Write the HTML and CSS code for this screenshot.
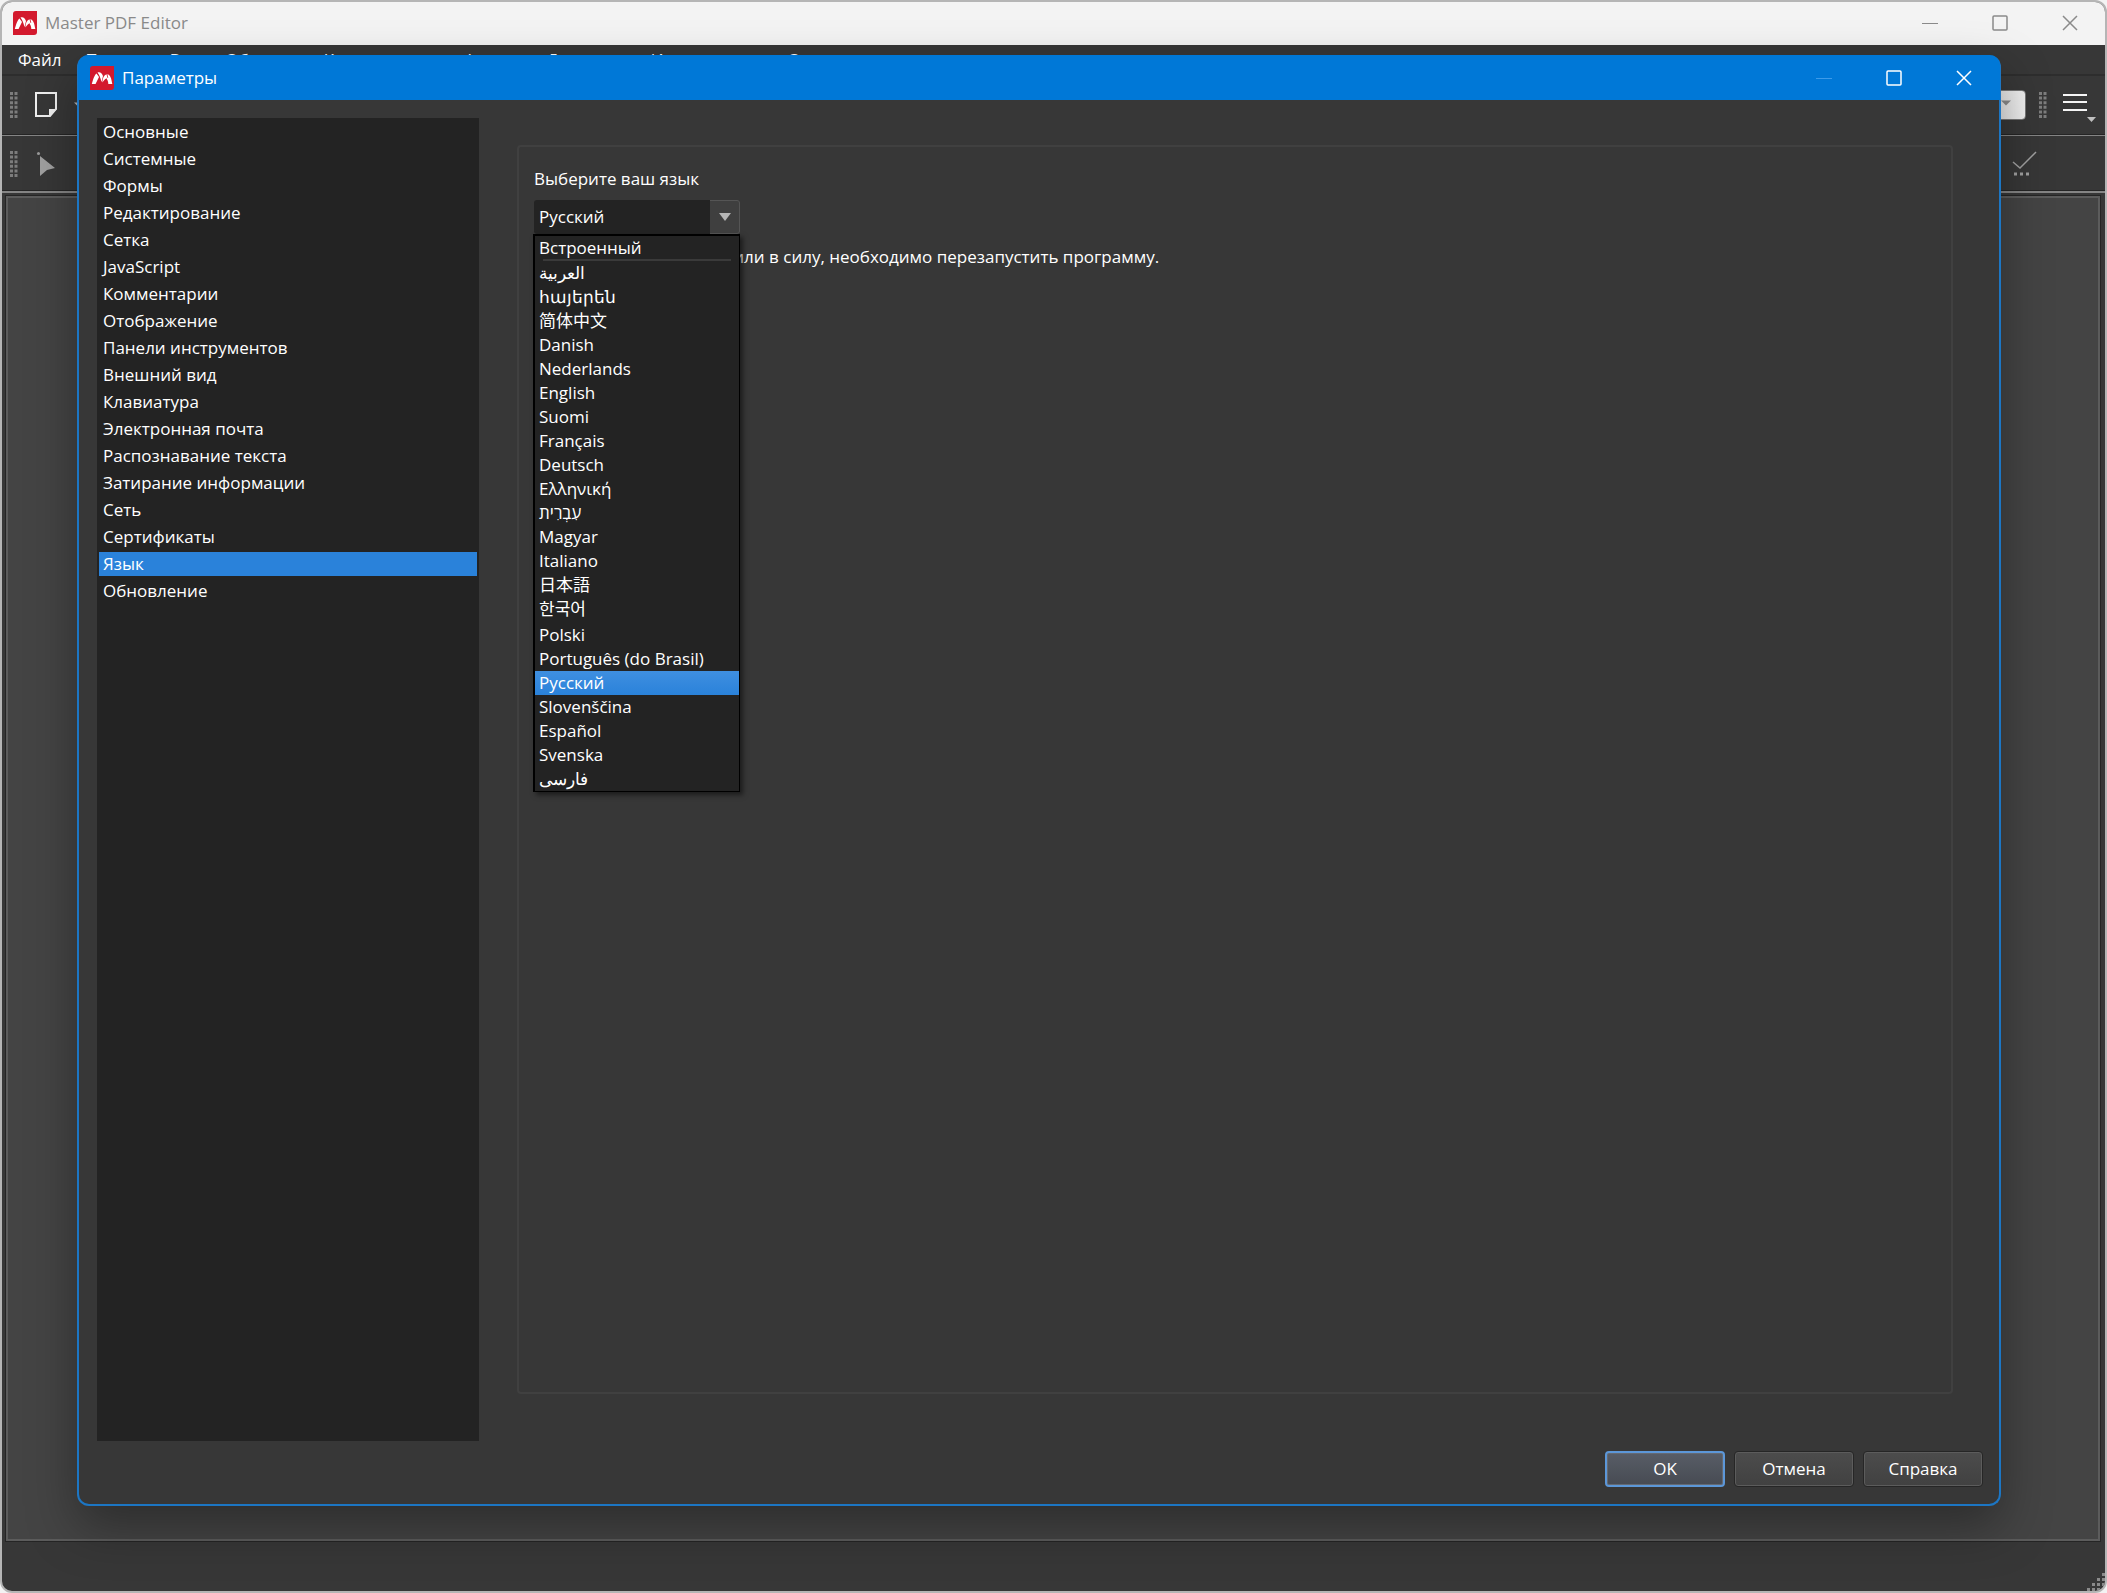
FILE: index.html
```html
<!DOCTYPE html>
<html lang="ru">
<head>
  <meta charset="utf-8">
  <title>Master PDF Editor</title>
  <link rel="stylesheet" href="styles.css">
</head>
<body>
  <svg class="defs" aria-hidden="true">
    <symbol id="logo" viewBox="0 0 24 24">
      <path d="M3 0h21v21a3 3 0 0 1-3 3H0V3a3 3 0 0 1 3-3z" fill="#d3192d"/>
      <path d="M1.800 18C3 14 4 9.500 6.500 7.500L9 11 5.500 18z" fill="#fff"/>
      <path d="M7.500 6.500C10 5.500 12 7 13 10l-1.500 6C10.500 12 9.500 9 7.500 6.500z" fill="#fff"/>
      <path d="M12.300 16.500C12.500 12 14 9 16.500 8.200l1 3.500c-2 .5-3.500 2.500-5.200 4.800z" fill="#fff"/>
      <path d="M17.300 8.200C20.500 8.500 21.500 13 22.300 18h-4c0-2.500-.8-4.500-2-5.500l2-1z" fill="#fff"/>
    </symbol>
    <symbol id="grip" viewBox="0 0 8 26">
      <path d="M1.500 0v26M6 0v26" stroke="#7d7d7d" stroke-width="3" stroke-dasharray="3 1.600"/>
    </symbol>
    <symbol id="min" viewBox="0 0 16 16"><path d="M0 8.500h16" stroke="currentColor"/></symbol>
    <symbol id="max" viewBox="0 0 16 16"><rect x="1" y="1" width="14" height="14" rx="1" fill="none" stroke="currentColor" stroke-width="1.500"/></symbol>
    <symbol id="close" viewBox="0 0 16 16"><path d="M1 1l14 14M15 1L1 15" stroke="currentColor" stroke-width="1.500"/></symbol>
  </svg>

  <div class="window">
    <header class="titlebar">
      <svg class="logo"><use href="#logo"/></svg>
      <span class="title">Master PDF Editor</span>
      <button class="win-btn" aria-label="Свернуть"><svg><use href="#min"/></svg></button>
      <button class="win-btn" aria-label="Развернуть"><svg><use href="#max"/></svg></button>
      <button class="win-btn" aria-label="Закрыть"><svg><use href="#close"/></svg></button>
    </header>

    <nav class="menubar">
      <a href="#">Файл</a>
      <a href="#">Правка</a>
      <a href="#">Вид</a>
      <a href="#">Объекты</a>
      <a href="#">Комментарии</a>
      <a href="#">Формы</a>
      <a href="#">Документ</a>
      <a href="#">Инструменты</a>
      <a href="#">Справка</a>
    </nav>

    <div class="toolbar toolbar-main">
      <svg class="grip"><use href="#grip"/></svg>
      <button class="tool" aria-label="Новый документ">
        <svg width="24" height="26" viewBox="0 0 24 26">
          <path d="M2 1h20v16l-6 7H2z" fill="none" stroke="#f0f0f0" stroke-width="2"/>
          <path d="M15 25v-8h8z" fill="#f0f0f0"/>
        </svg>
      </button>
      <svg class="arrow" viewBox="0 0 10 5"><path d="M0 0h10L5 5z"/></svg>
      <span class="spacer"></span>
      <button class="zoom-box" aria-label="Масштаб"><svg class="arrow" viewBox="0 0 10 5"><path d="M0 0h10L5 5z"/></svg></button>
      <svg class="grip"><use href="#grip"/></svg>
      <button class="tool menu-tool" aria-label="Меню">
        <svg width="34" height="34" viewBox="0 0 34 34">
          <path d="M0 7h24M0 14h24M0 22h24" stroke="#f5f5f5" stroke-width="2"/>
          <path d="M24 29h9l-4.500 5z" fill="#c0c0c0"/>
        </svg>
      </button>
    </div>

    <div class="toolbar toolbar-edit">
      <svg class="grip"><use href="#grip"/></svg>
      <button class="tool" aria-label="Выделение">
        <svg width="24" height="26" viewBox="0 0 24 26">
          <circle cx="4.500" cy="2.500" r="1.500" fill="#9a9a9a"/>
          <path d="M6 5l15 12-8 2-7 6z" fill="#a0a0a0"/>
        </svg>
      </button>
      <span class="spacer"></span>
      <button class="tool check-tool" aria-label="Проверка">
        <svg width="25" height="26" viewBox="0 0 25 26">
          <path d="M1 11l7 6L24 1" fill="none" stroke="#a0a0a0" stroke-width="1.500"/>
          <path d="M2 23h3M8 23h3M14 23h3" stroke="#a0a0a0" stroke-width="3"/>
        </svg>
      </button>
    </div>

    <main class="workspace"></main>
    <footer class="statusbar">
      <svg width="18" height="18" viewBox="0 0 18 18">
        <path d="M15 0h3v3h-3zM10 5h3v3h-3zM15 5h3v3h-3zM5 10h3v3H5zM10 10h3v3h-3zM15 10h3v3h-3zM0 15h3v3H0zM5 15h3v3H5zM10 15h3v3h-3z" fill="#8a8a8a"/>
      </svg>
    </footer>

    <section class="dialog" role="dialog" aria-labelledby="dialog-title">
      <header class="titlebar dialog-titlebar">
        <svg class="logo"><use href="#logo"/></svg>
        <span class="title" id="dialog-title">Параметры</span>
        <button class="win-btn disabled" aria-label="Свернуть" disabled><svg><use href="#min"/></svg></button>
        <button class="win-btn" aria-label="Развернуть"><svg><use href="#max"/></svg></button>
        <button class="win-btn" aria-label="Закрыть"><svg><use href="#close"/></svg></button>
      </header>

      <div class="dialog-body">
        <ul class="sections">
          <li><a href="#">Основные</a></li>
          <li><a href="#">Системные</a></li>
          <li><a href="#">Формы</a></li>
          <li><a href="#">Редактирование</a></li>
          <li><a href="#">Сетка</a></li>
          <li><a href="#">JavaScript</a></li>
          <li><a href="#">Комментарии</a></li>
          <li><a href="#">Отображение</a></li>
          <li><a href="#">Панели инструментов</a></li>
          <li><a href="#">Внешний вид</a></li>
          <li><a href="#">Клавиатура</a></li>
          <li><a href="#">Электронная почта</a></li>
          <li><a href="#">Распознавание текста</a></li>
          <li><a href="#">Затирание информации</a></li>
          <li><a href="#">Сеть</a></li>
          <li><a href="#">Сертификаты</a></li>
          <li><a href="#" class="active">Язык</a></li>
          <li><a href="#">Обновление</a></li>
        </ul>

        <div class="group">
          <label for="language">Выберите ваш язык</label>
          <div class="combo">
            <select id="language">
              <option>Русский</option>
            </select>
            <span class="combo-arrow"><svg class="arrow" viewBox="0 0 12 8"><path d="M0 0h12L6 8z"/></svg></span>
            <ul class="options" role="listbox" aria-label="Язык">
              <li role="option" class="builtin">Встроенный</li>
              <li role="option">العربية</li>
              <li role="option">հայերեն</li>
              <li role="option" lang="zh-CN">简体中文</li>
              <li role="option">Danish</li>
              <li role="option">Nederlands</li>
              <li role="option">English</li>
              <li role="option">Suomi</li>
              <li role="option">Français</li>
              <li role="option">Deutsch</li>
              <li role="option">Ελληνική</li>
              <li role="option">עִבְרִית</li>
              <li role="option">Magyar</li>
              <li role="option">Italiano</li>
              <li role="option" lang="ja">日本語</li>
              <li role="option" lang="ko">한국어</li>
              <li role="option">Polski</li>
              <li role="option">Português (do Brasil)</li>
              <li role="option" class="selected" aria-selected="true">Русский</li>
              <li role="option">Slovenščina</li>
              <li role="option">Español</li>
              <li role="option">Svenska</li>
              <li role="option">فارسی</li>
            </ul>
          </div>
          <p class="note">Чтобы изменения вступили в силу, необходимо перезапустить программу.</p>
        </div>
      </div>

      <div class="buttons">
        <button class="btn primary">OK</button>
        <button class="btn">Отмена</button>
        <button class="btn">Справка</button>
      </div>
    </section>
  </div>
</body>
</html>
```
FILE: styles.css
```css
* {
  box-sizing: border-box;
}

body {
  margin: 0;
  background-color: #f3f3f3;
  color: #fff;
  font-family: "Open Sans", "Noto Sans", "Noto Sans CJK SC", sans-serif;
  font-size: 17px;
  line-height: 24px;
}

ul {
  list-style: none;
  margin: 0;
  padding: 0;
}

a {
  color: inherit;
  text-decoration: none;
}

button,
select {
  font: inherit;
  color: inherit;
  border: none;
  background: none;
  padding: 0;
}

.defs {
  display: none;
}

.window {
  position: relative;
  display: flex;
  flex-direction: column;
  height: 100vh;
  border: 2px solid #b5b5b5;
  border-radius: 12px;
  overflow: hidden;
  background-color: #373737;
}

/* title bars */
.titlebar {
  display: flex;
  align-items: center;
  height: 43px;
  padding: 0 0 2px 11px;
  background-color: #f3f3f3;
  color: #8a8a8a;
}

.logo {
  width: 24px;
  height: 24px;
  margin-right: 8px;
}

.title {
  flex: 1;
}

.win-btn {
  display: flex;
  align-items: center;
  justify-content: center;
  width: 70px;
  height: 100%;
}

.win-btn svg {
  width: 16px;
  height: 16px;
}

.win-btn.disabled {
  color: #3d9bea;
}

/* menu and toolbars */
.menubar {
  display: flex;
  gap: 24px;
  height: 31px;
  padding: 3px 16px;
  border-bottom: 2px solid #2d2d2d;
}

.toolbar {
  display: flex;
  align-items: center;
  padding-left: 8px;
  border-bottom: 1px solid #858585;
  box-shadow: inset 0 -1px #252525;
}

.toolbar-main {
  height: 60px;
  padding-bottom: 1px;
}

.toolbar-edit {
  height: 57px;
  border-bottom-width: 2px;
}

.grip {
  width: 8px;
  height: 26px;
}

.tool {
  display: flex;
  margin: 0 16px;
}

.arrow {
  width: 10px;
  height: 6px;
  fill: #b5b5b5;
}

.spacer {
  flex: 1;
}

.zoom-box {
  display: flex;
  align-items: center;
  justify-content: flex-end;
  width: 80px;
  height: 30px;
  margin-right: 13px;
  padding: 0 14px 4px;
  border: 1px solid #777;
  border-radius: 4px;
  background: linear-gradient(to right, #ccc, #f0f0f0);
}

.zoom-box .arrow {
  fill: #8a8a8a;
}

.menu-tool {
  margin: 0 8px 0 16px;
}

.check-tool {
  margin-right: 68px;
}

.workspace {
  flex: 1;
  margin: 3px 5px 0 4px;
  border: 2px solid #5c5c5c;
  outline: 1px solid #252525;
  background-color: #444;
}

.statusbar {
  display: flex;
  align-items: flex-end;
  justify-content: flex-end;
  height: 50px;
}

/* settings dialog */
.dialog {
  position: absolute;
  top: 53px;
  left: 75px;
  right: 104px;
  bottom: 85px;
  display: flex;
  flex-direction: column;
  border: 2px solid #1c76c4;
  border-top: none;
  border-radius: 12px;
  background-color: #373737;
  box-shadow: 0 20px 50px rgba(0, 0, 0, 0.35);
}

.dialog-titlebar {
  height: 45px;
  margin: 0 -1px;
  padding: 0 1px 0 12px;
  border-radius: 10px 10px 0 0;
  background-color: #0078d7;
  color: #fff;
}

.dialog-body {
  flex: 1;
  display: flex;
  gap: 38px;
  padding: 18px 46px 0 18px;
}

.sections {
  display: flex;
  flex-direction: column;
  gap: 3px;
  width: 382px;
  padding: 2px;
  background-color: #232323;
}

.sections a {
  display: block;
  padding-left: 4px;
}

.sections .active {
  background-color: #2a82da;
}

.group {
  flex: 1;
  margin: 27px 0 47px;
  padding: 20px 15px;
  border: 2px solid #404040;
  border-radius: 4px;
}

.group label {
  display: block;
}

.combo {
  position: relative;
  display: flex;
  width: 206px;
  height: 34px;
  margin-top: 9px;
  background-color: #232323;
  border-radius: 3px;
}

.combo select {
  flex: 1;
  appearance: none;
  padding-left: 5px;
}

.combo-arrow {
  display: flex;
  align-items: center;
  justify-content: center;
  width: 30px;
  border: 1px solid #555;
  border-left: none;
  border-radius: 0 3px 3px 0;
  background-color: #3f3f3f;
}

.combo-arrow .arrow {
  width: 12px;
  height: 8px;
}

.options {
  position: absolute;
  top: 34px;
  left: -1px;
  right: 0;
  border: 2px solid #000;
  border-right-width: 1px;
  border-bottom-width: 1px;
  background-color: #232323;
  box-shadow: 3px 3px 5px rgba(0, 0, 0, 0.5);
}

.options li {
  height: 24px;
  padding-left: 4px;
}

.options .builtin {
  height: 25px;
  margin: 0 8px 0;
  padding: 0;
  text-indent: -4px;
  border-bottom: 2px solid #3a3a3a;
}

.options .selected {
  background: linear-gradient(#3f8fe0, #2a82da);
}

.options li[lang="ko"] {
  height: 26px;
}

.note {
  margin: 11px 0 0;
}

.buttons {
  display: flex;
  justify-content: flex-end;
  gap: 9px;
  padding: 10px 16px 17px;
}

.btn {
  width: 120px;
  height: 36px;
  border: 1px solid #262626;
  border-radius: 4px;
  background: linear-gradient(#4c4c4c, #414141);
  box-shadow: inset 0 0 0 1px #5c5c5c;
}

.btn.primary {
  border: 2px solid #5c97d8;
  background: linear-gradient(#585d66, #474b53);
  box-shadow: inset 0 0 0 1px #656a73;
}
```
